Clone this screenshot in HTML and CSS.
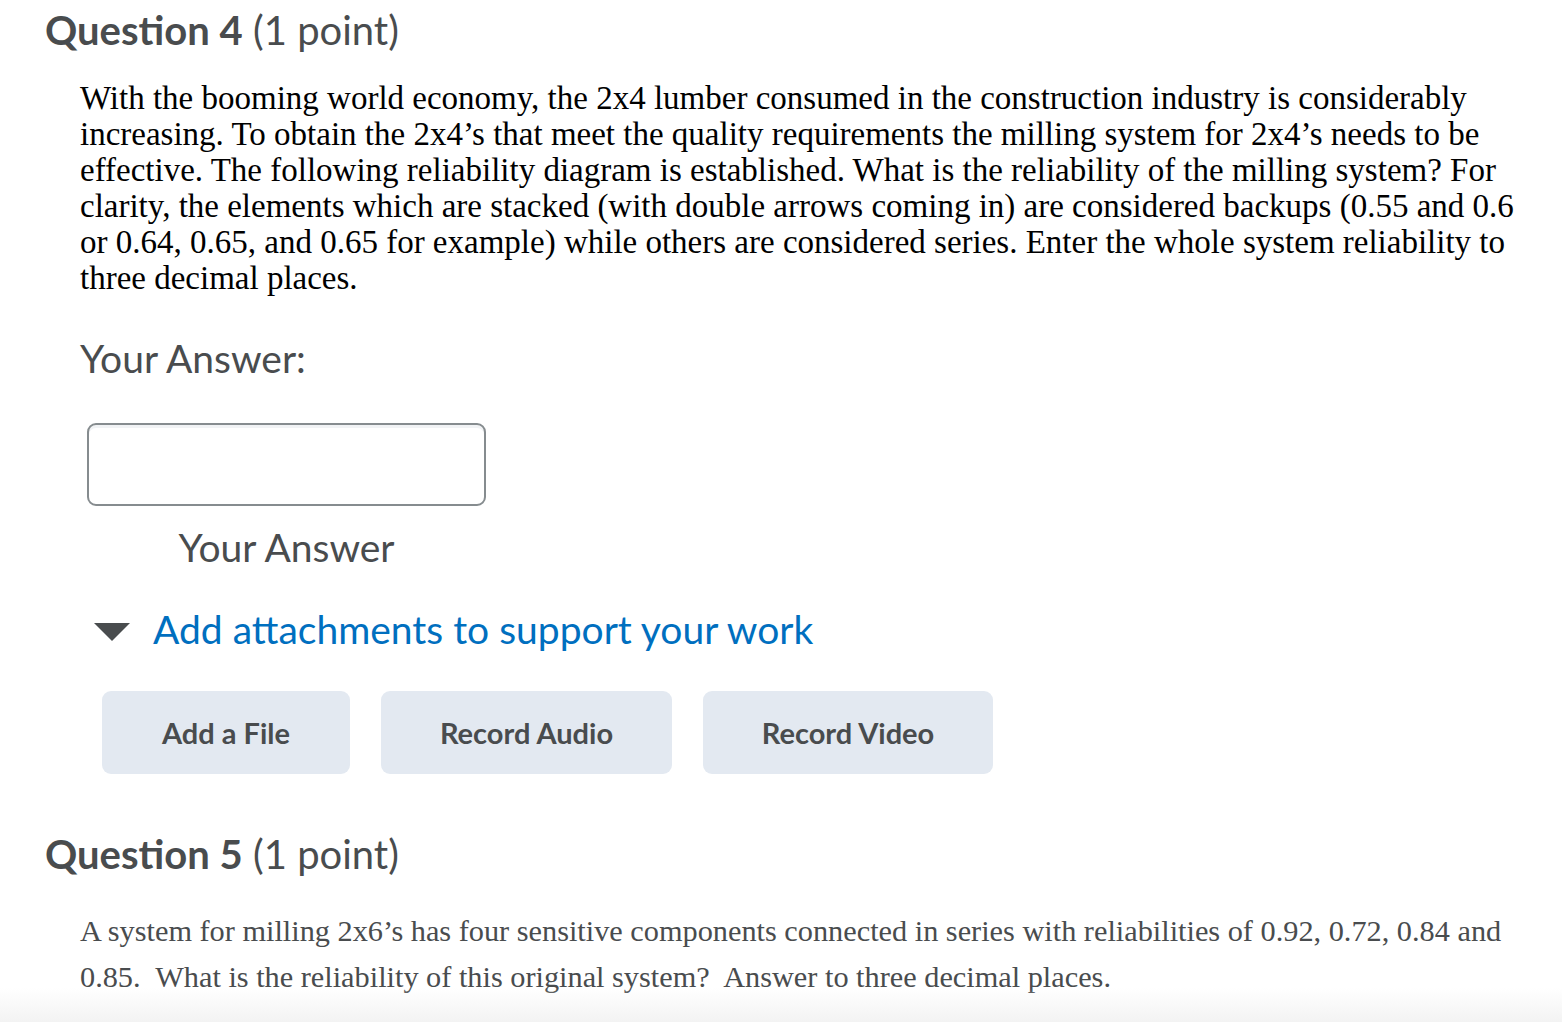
FILE: index.html
```html
<!DOCTYPE html>
<html>
<head>
<meta charset="utf-8">
<link rel="stylesheet" href="styles.css">
</head>
<body>
<div class="page">
  <h2 class="q-title"><strong>Question 4</strong> (1 point)</h2>
  <div class="q-body">
    <p class="q4-text">With the booming world economy, the 2x4 lumber consumed in the construction industry is considerably increasing. To obtain the 2x4’s that meet the quality requirements the milling system for 2x4’s needs to be effective. The following reliability diagram is established. What is the reliability of the milling system? For clarity, the elements which are stacked (with double arrows coming in) are considered backups (0.55 and 0.6 or 0.64, 0.65, and 0.65 for example) while others are considered series. Enter the whole system reliability to three decimal places.</p>
    <div class="answer-label">Your Answer:</div>
    <div class="answer-field">
      <input class="answer-input" type="text" aria-label="Your Answer">
      <div class="answer-caption">Your Answer</div>
    </div>
    <div class="attach-toggle">
      <svg class="caret" width="36" height="18" viewBox="0 0 36 18"><path d="M0 0 H36 L18 18 Z" fill="#494c4e"/></svg>
      <span class="attach-link">Add attachments to support your work</span>
    </div>
    <div class="attach-buttons">
      <button class="btn btn-file">Add a File</button>
      <button class="btn btn-audio">Record Audio</button>
      <button class="btn btn-video">Record Video</button>
    </div>
  </div>
  <h2 class="q-title q5"><strong>Question 5</strong> (1 point)</h2>
  <div class="q-body">
    <p class="q5-text">A system for milling 2x6’s has four sensitive components connected in series with reliabilities of 0.92, 0.72, 0.84 and 0.85.&nbsp; What is the reliability of this original system?&nbsp; Answer to three decimal places.</p>
  </div>
</div>
<div class="fade"></div>
</body>
</html>
```
FILE: styles.css
```css
html, body {
  margin: 0;
  padding: 0;
  background: #ffffff;
  overflow: hidden;
}
body {
  width: 1562px;
  height: 1022px;
  position: relative;
  font-family: Lato, "Noto Sans", sans-serif;
  color: #494c4e;
}
.page {
  padding: 6px 0 0 45px;
}
.q-title {
  margin: 0;
  font-size: 40px;
  line-height: 48px;
  font-weight: 400;
  color: #494c4e;
}
.q-title strong {
  font-weight: 700;
}
.q-body {
  padding-left: 35px;
}
.q4-text {
  margin: 26px 0 0 0;
  font-family: "Liberation Serif", "Times New Roman", serif;
  font-size: 33px;
  line-height: 36px;
  color: #000000;
  width: 1445px;
}
.answer-label {
  margin-top: 38px;
  font-size: 39px;
  line-height: 48px;
  color: #494c4e;
}
.answer-field {
  margin-top: 41px;
  margin-left: 7px;
  width: 399px;
  display: flex;
  flex-direction: column;
  align-items: center;
}
.answer-input {
  box-sizing: border-box;
  width: 399px;
  height: 83px;
  border: 2px solid #868c8f;
  border-radius: 9px;
  box-shadow: inset 0 3px 0 #f1f3f5;
  background: #fff;
  margin: 0;
}
.answer-caption {
  margin-top: 18px;
  font-size: 39px;
  line-height: 46px;
  color: #494c4e;
}
.attach-toggle {
  margin-top: 35px;
  margin-left: 14px;
  display: flex;
  align-items: center;
  gap: 23px;
}
.caret {
  display: block;
  margin-top: 6px;
}
.attach-link {
  font-size: 39px;
  line-height: 48px;
  color: #006fbf;
}
.attach-buttons {
  margin-top: 38px;
  margin-left: 22px;
  display: flex;
  gap: 31px;
}
.btn {
  height: 83px;
  border: none;
  border-radius: 9px;
  background: #e3e9f1;
  font-family: Lato, "Noto Sans", sans-serif;
  font-weight: 700;
  font-size: 29px;
  color: #494c4e;
  padding: 0;
}
.btn-file { width: 248px; }
.btn-audio { width: 291px; }
.btn-video { width: 290px; }
.q5 {
  margin-top: 56px;
}
.q5-text {
  margin: 30px 0 0 0;
  font-family: "Liberation Serif", "Times New Roman", serif;
  font-size: 30.3px;
  line-height: 46px;
  color: #494c4e;
  width: 1445px;
}
.fade {
  position: absolute;
  left: 0;
  right: 0;
  bottom: 0;
  height: 34px;
  background: linear-gradient(to bottom, rgba(245,245,245,0), #f3f3f3);
  pointer-events: none;
}
```
